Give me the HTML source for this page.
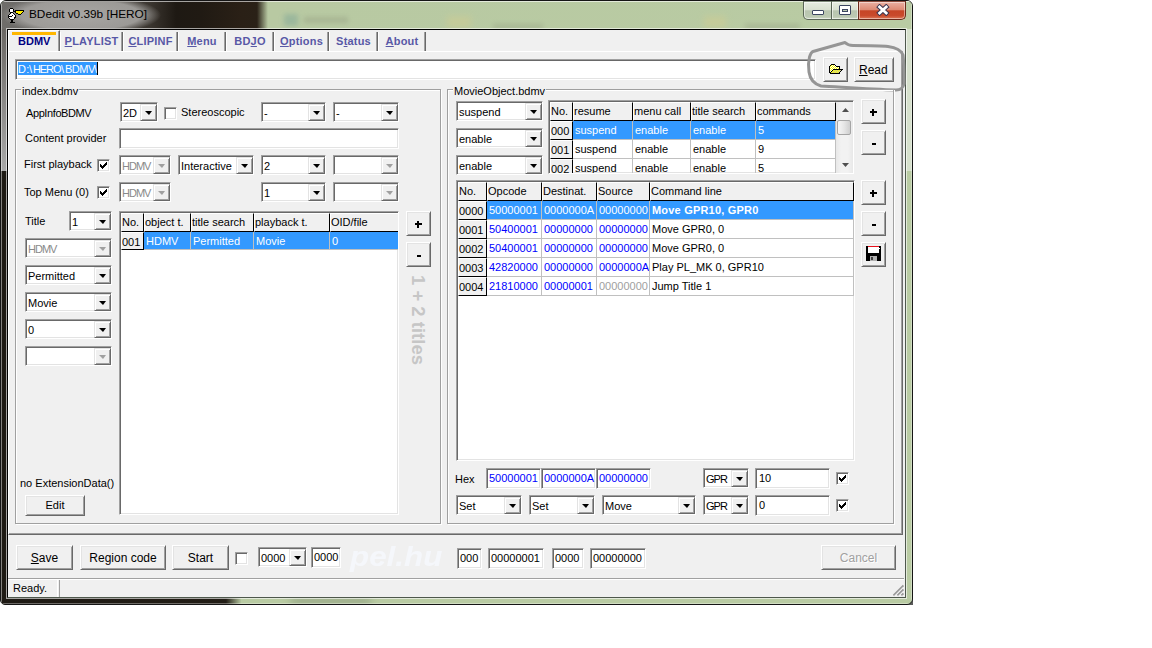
<!DOCTYPE html><html><head><meta charset="utf-8"><title>BDedit</title><style>
*{margin:0;padding:0;box-sizing:border-box}
html,body{width:1152px;height:648px;background:#fff;overflow:hidden}
body{position:relative;font:11px "Liberation Sans",sans-serif;color:#000}
.a{position:absolute}
.t{position:absolute;white-space:nowrap;line-height:13px}
.sunk{position:absolute;background:#fff;border:1px solid;border-color:#a0a0a0 #fff #fff #a0a0a0;box-shadow:inset 1px 1px #696969,inset -1px -1px #e3e3e3;overflow:hidden}
.btn{position:absolute;background:#f0f0f0;border:1px solid;border-color:#fff #696969 #696969 #fff;box-shadow:inset 1px 1px #e3e3e3,inset -1px -1px #a0a0a0;text-align:center;line-height:13px}
.ct{position:absolute;left:2px;top:4px;line-height:13px;white-space:nowrap}
.ddb{position:absolute;right:0;top:1px;bottom:0;width:17px;background:#f0f0f0;border:1px solid;border-color:#e3e3e3 #696969 #696969 #e3e3e3;box-shadow:inset 1px 1px #fff,inset -1px -1px #a0a0a0}
.arr{position:absolute;left:4px;top:6px;width:0;height:0;border-left:4px solid transparent;border-right:3px solid transparent;border-top:4px solid #000}
.arr.dis{border-top-color:#a0a0a0}
.chk{position:absolute;width:13px;height:13px;background:#fff;border:1px solid;border-color:#a0a0a0 #fff #fff #a0a0a0;box-shadow:inset 1px 1px #696969,inset -1px -1px #e3e3e3}
.grp{position:absolute;border:1px solid #a0a0a0;box-shadow:1px 1px #fff,inset 1px 1px #fff}
.glab{background:#f0f0f0;padding:0 1px}
.tab{position:absolute;top:32px;height:19px;border-left:1px solid #fff;border-right:1px solid #696969;box-shadow:inset -1px 0 #a0a0a0;font-weight:bold;color:#5858a6;text-align:center;line-height:13px;padding-top:3px;letter-spacing:0.2px}
.tab u{text-decoration:underline;text-underline-offset:1px;text-decoration-thickness:1px}
.grid{position:absolute;background:#fff;border:1px solid;border-color:#a0a0a0 #fff #fff #a0a0a0;box-shadow:inset 1px 1px #696969,inset -1px -1px #e3e3e3;overflow:hidden}
.fc{position:absolute;background:#f0f0f0;border-top:1px solid #fff;border-left:1px solid #fff;border-right:1px solid #000;border-bottom:1px solid #000;line-height:13px;padding:2px 0 0 0;white-space:nowrap;overflow:hidden}
.dc{position:absolute;border-right:1px solid #c0c0c0;border-bottom:1px solid #c0c0c0;line-height:13px;padding:3px 0 0 2px;white-space:nowrap;overflow:hidden}
.sel{background:#3399ff;color:#fff}
.blue{color:#0000ff}
</style></head><body>
<div class="a" style="left:905px;top:597px;width:8px;height:8px;background:linear-gradient(135deg,#777 0,#555 100%)"></div>
<div class="a" style="left:0;top:0;width:913px;height:605px;border-radius:6px 6px 6px 5px;overflow:hidden;border:1px solid #151515;background:#b9cba3"><div class="a" style="left:0;top:0;width:911px;height:29px;background:linear-gradient(90deg,#6f6d6a 0,#6a6865 60px,#3a352f 150px,#1e1913 175px,#201a13 200px,#2a2016 240px,#2a2117 256px,#b8c9a2 267px,#b9cba3 100%)"></div><div class="a" style="left:0;top:28px;width:7px;height:142px;background:linear-gradient(#6a6763,#a9a9a9)"></div><div class="a" style="left:0;top:170px;width:7px;height:440px;background:#1e1a14"></div><div class="a" style="left:905px;top:28px;width:6px;height:142px;background:#d6e0cc"></div><div class="a" style="left:0;top:596px;width:240px;height:10px;background:linear-gradient(90deg,#1e1a14 0,#221d15 225px,#b4c59e 240px)"></div><div class="a" style="left:290px;top:597px;width:80px;height:6px;background:#8e9e7e;filter:blur(4px)"></div><div class="a" style="left:0;top:0;width:1px;height:605px;background:rgba(255,255,255,.45)"></div><div class="a" style="left:0;top:0;width:911px;height:1px;background:rgba(255,255,255,.6)"></div><div class="a" style="left:0;top:602px;width:911px;height:1px;background:rgba(255,255,255,.35)"></div><div class="a" style="left:910px;top:0;width:1px;height:605px;background:rgba(255,255,255,.35)"></div><div class="a" style="left:283px;top:13px;width:14px;height:12px;background:#8fb09a;filter:blur(2.5px);opacity:.7"></div><div class="a" style="left:303px;top:16px;width:44px;height:6px;background:#a3b08f;filter:blur(2.5px);opacity:.8"></div><div class="a" style="left:446px;top:15px;width:24px;height:12px;background:#cdcc94;filter:blur(3px);opacity:.6"></div><div class="a" style="left:492px;top:23px;width:50px;height:5px;background:#a3b08f;filter:blur(2.5px);opacity:.8"></div><div class="a" style="left:703px;top:15px;width:22px;height:12px;background:#cdcc94;filter:blur(3px);opacity:.6"></div><div class="a" style="left:744px;top:23px;width:55px;height:5px;background:#a3b08f;filter:blur(2.5px);opacity:.8"></div></div>
<div class="a" style="left:1px;top:1px;width:175px;height:27px;background:radial-gradient(ellipse 80px 20px at 80px 14px,rgba(168,166,163,1) 0,rgba(160,158,155,.95) 75%,rgba(120,118,115,0) 100%)"></div>
<svg class="a" style="left:7px;top:8px" width="20" height="15" shape-rendering="crispEdges"><rect x="3" y="0" width="1" height="1" fill="#000"/><rect x="4" y="0" width="1" height="1" fill="#000"/><rect x="5" y="0" width="1" height="1" fill="#000"/><rect x="2" y="1" width="1" height="1" fill="#000"/><rect x="3" y="1" width="1" height="1" fill="#fff"/><rect x="4" y="1" width="1" height="1" fill="#fff"/><rect x="5" y="1" width="1" height="1" fill="#fff"/><rect x="6" y="1" width="1" height="1" fill="#000"/><rect x="2" y="2" width="1" height="1" fill="#000"/><rect x="3" y="2" width="1" height="1" fill="#fff"/><rect x="4" y="2" width="1" height="1" fill="#fff"/><rect x="5" y="2" width="1" height="1" fill="#fff"/><rect x="6" y="2" width="1" height="1" fill="#000"/><rect x="8" y="2" width="1" height="1" fill="#000"/><rect x="9" y="2" width="1" height="1" fill="#000"/><rect x="10" y="2" width="1" height="1" fill="#000"/><rect x="11" y="2" width="1" height="1" fill="#000"/><rect x="12" y="2" width="1" height="1" fill="#000"/><rect x="13" y="2" width="1" height="1" fill="#000"/><rect x="14" y="2" width="1" height="1" fill="#000"/><rect x="15" y="2" width="1" height="1" fill="#000"/><rect x="16" y="2" width="1" height="1" fill="#000"/><rect x="2" y="3" width="1" height="1" fill="#000"/><rect x="3" y="3" width="1" height="1" fill="#fff"/><rect x="4" y="3" width="1" height="1" fill="#fff"/><rect x="5" y="3" width="1" height="1" fill="#fff"/><rect x="6" y="3" width="1" height="1" fill="#000"/><rect x="7" y="3" width="1" height="1" fill="#000"/><rect x="8" y="3" width="1" height="1" fill="#000"/><rect x="9" y="3" width="1" height="1" fill="#ffee00"/><rect x="10" y="3" width="1" height="1" fill="#ffee00"/><rect x="11" y="3" width="1" height="1" fill="#ffee00"/><rect x="12" y="3" width="1" height="1" fill="#ffee00"/><rect x="13" y="3" width="1" height="1" fill="#ffee00"/><rect x="14" y="3" width="1" height="1" fill="#ffee00"/><rect x="15" y="3" width="1" height="1" fill="#ffee00"/><rect x="16" y="3" width="1" height="1" fill="#000"/><rect x="3" y="4" width="1" height="1" fill="#000"/><rect x="4" y="4" width="1" height="1" fill="#000"/><rect x="5" y="4" width="1" height="1" fill="#000"/><rect x="8" y="4" width="1" height="1" fill="#000"/><rect x="9" y="4" width="1" height="1" fill="#ffee00"/><rect x="10" y="4" width="1" height="1" fill="#ffee00"/><rect x="11" y="4" width="1" height="1" fill="#ffee00"/><rect x="12" y="4" width="1" height="1" fill="#ffee00"/><rect x="13" y="4" width="1" height="1" fill="#ffee00"/><rect x="14" y="4" width="1" height="1" fill="#ffee00"/><rect x="15" y="4" width="1" height="1" fill="#000"/><rect x="3" y="5" width="1" height="1" fill="#000"/><rect x="4" y="5" width="1" height="1" fill="#fff"/><rect x="5" y="5" width="1" height="1" fill="#fff"/><rect x="6" y="5" width="1" height="1" fill="#000"/><rect x="9" y="5" width="1" height="1" fill="#000"/><rect x="10" y="5" width="1" height="1" fill="#000"/><rect x="11" y="5" width="1" height="1" fill="#ffee00"/><rect x="12" y="5" width="1" height="1" fill="#ffee00"/><rect x="13" y="5" width="1" height="1" fill="#ffee00"/><rect x="14" y="5" width="1" height="1" fill="#000"/><rect x="2" y="6" width="1" height="1" fill="#000"/><rect x="3" y="6" width="1" height="1" fill="#fff"/><rect x="4" y="6" width="1" height="1" fill="#fff"/><rect x="5" y="6" width="1" height="1" fill="#fff"/><rect x="6" y="6" width="1" height="1" fill="#fff"/><rect x="7" y="6" width="1" height="1" fill="#000"/><rect x="11" y="6" width="1" height="1" fill="#000"/><rect x="12" y="6" width="1" height="1" fill="#000"/><rect x="13" y="6" width="1" height="1" fill="#000"/><rect x="1" y="7" width="1" height="1" fill="#000"/><rect x="2" y="7" width="1" height="1" fill="#fff"/><rect x="3" y="7" width="1" height="1" fill="#fff"/><rect x="4" y="7" width="1" height="1" fill="#fff"/><rect x="5" y="7" width="1" height="1" fill="#000"/><rect x="6" y="7" width="1" height="1" fill="#fff"/><rect x="7" y="7" width="1" height="1" fill="#fff"/><rect x="8" y="7" width="1" height="1" fill="#000"/><rect x="1" y="8" width="1" height="1" fill="#000"/><rect x="2" y="8" width="1" height="1" fill="#000"/><rect x="3" y="8" width="1" height="1" fill="#000"/><rect x="4" y="8" width="1" height="1" fill="#000"/><rect x="5" y="8" width="1" height="1" fill="#fff"/><rect x="6" y="8" width="1" height="1" fill="#fff"/><rect x="7" y="8" width="1" height="1" fill="#fff"/><rect x="8" y="8" width="1" height="1" fill="#000"/><rect x="1" y="9" width="1" height="1" fill="#000"/><rect x="2" y="9" width="1" height="1" fill="#fff"/><rect x="3" y="9" width="1" height="1" fill="#fff"/><rect x="4" y="9" width="1" height="1" fill="#fff"/><rect x="5" y="9" width="1" height="1" fill="#fff"/><rect x="6" y="9" width="1" height="1" fill="#fff"/><rect x="7" y="9" width="1" height="1" fill="#000"/><rect x="8" y="9" width="1" height="1" fill="#000"/><rect x="2" y="10" width="1" height="1" fill="#000"/><rect x="3" y="10" width="1" height="1" fill="#fff"/><rect x="4" y="10" width="1" height="1" fill="#fff"/><rect x="5" y="10" width="1" height="1" fill="#fff"/><rect x="6" y="10" width="1" height="1" fill="#fff"/><rect x="7" y="10" width="1" height="1" fill="#000"/><rect x="3" y="11" width="1" height="1" fill="#000"/><rect x="4" y="11" width="1" height="1" fill="#000"/><rect x="5" y="11" width="1" height="1" fill="#000"/><rect x="6" y="11" width="1" height="1" fill="#000"/><rect x="4" y="12" width="1" height="1" fill="#000"/><rect x="5" y="12" width="1" height="1" fill="#000"/><rect x="4" y="13" width="1" height="1" fill="#000"/><rect x="5" y="13" width="1" height="1" fill="#000"/><rect x="3" y="14" width="1" height="1" fill="#000"/><rect x="4" y="14" width="1" height="1" fill="#000"/><rect x="5" y="14" width="1" height="1" fill="#000"/><rect x="6" y="14" width="1" height="1" fill="#000"/><rect x="7" y="14" width="1" height="1" fill="#000"/></svg>
<div class="t " style="left:29px;top:7px;font-size:11.8px;color:#000;line-height:15px">BDedit v0.39b [HERO]</div>
<div class="a" style="left:803px;top:1px;width:56px;height:19px;border:1px solid #5a6656;border-top-color:#7d8a78;border-radius:0 0 0 5px;background:linear-gradient(#e6ece0 0,#d9e1d1 45%,#b9c5b0 52%,#bcc9b2 85%,#cdd8c4 100%);box-shadow:inset 0 0 0 1px rgba(255,255,255,.55)"></div>
<div class="a" style="left:831px;top:1px;width:1px;height:19px;background:#5a6656"></div>
<div class="a" style="left:832px;top:2px;width:1px;height:17px;background:rgba(255,255,255,.6)"></div>
<div class="a" style="left:858px;top:1px;width:48px;height:19px;border:1px solid #6b2a1a;border-top-color:#8a4a3a;border-radius:0 0 5px 0;background:linear-gradient(#eab0a2 0,#dd8a74 45%,#c64526 52%,#c94a2c 80%,#dc7a5a 100%);box-shadow:inset 0 0 0 1px rgba(255,255,255,.45)"></div>
<div class="a" style="left:812px;top:10px;width:12px;height:5px;background:#fff;border:1px solid #3b4560;border-radius:1px"></div>
<div class="a" style="left:839px;top:5px;width:12px;height:10px;background:#fff;border:1px solid #3b4560;border-radius:1px"><div class="a" style="left:2px;top:3px;width:6px;height:3px;background:#b9c7ae;border:1px solid #3b4560"></div></div>
<svg class="a" style="left:876px;top:4px" width="14" height="12" viewBox="0 0 14 12"><path d="M3.6 3L10.2 9M10.2 3L3.6 9" stroke="#3b3550" stroke-width="4.8" stroke-linecap="square"/><path d="M3.6 3L10.2 9M10.2 3L3.6 9" stroke="#fff" stroke-width="2.8" stroke-linecap="square"/></svg>
<div class="a" style="left:7px;top:29px;width:899px;height:569px;border:1px solid #000;border-right-color:#4e584c;border-bottom-color:#4e584c;background:#f0f0f0;box-shadow:0 0 0 1px rgba(255,255,255,.6)"></div>
<div class="a" style="left:8px;top:51px;width:895px;height:484px;border-top:1px solid #fff;border-left:1px solid #fff;border-right:1px solid #696969;border-bottom:1px solid #696969;box-shadow:inset -1px -1px #a0a0a0"></div>
<div class="tab" style="left:60px;width:63px"><u>P</u>LAYLIST</div>
<div class="tab" style="left:123px;width:55px"><u>C</u>LIPINF</div>
<div class="tab" style="left:178px;width:48px"><u>M</u>enu</div>
<div class="tab" style="left:226px;width:48px">BD<u>J</u>O</div>
<div class="tab" style="left:274px;width:55px"><u>O</u>ptions</div>
<div class="tab" style="left:329px;width:49px">S<u>t</u>atus</div>
<div class="tab" style="left:378px;width:48px"><u>A</u>bout</div>
<div class="a" style="left:8px;top:30px;width:52px;height:21px;background:#f0f0f0;border-top:1px solid #fff;border-left:1px solid #fff;border-right:1px solid #696969;box-shadow:inset -1px 0 #a0a0a0"></div>
<div class="a" style="left:12px;top:32px;width:44px;height:3px;background:#ffb700"></div>
<div class="t " style="left:18px;top:35px;font-weight:bold;color:#000080">BDMV</div>
<div class="sunk" style="left:15px;top:59px;width:801px;height:21px"><div class="a" style="left:2px;top:2px;height:13px;width:79px;background:#3399ff;color:#fff;line-height:13px"><span class="a" style="left:0px;top:0.5px;letter-spacing:0.3px">D:</span><span class="a" style="left:11px;top:0.5px;letter-spacing:0px">\</span><span class="a" style="left:15px;top:0.5px;letter-spacing:-1.1px">HERO</span><span class="a" style="left:43px;top:0.5px;letter-spacing:0px">\</span><span class="a" style="left:47px;top:0.5px;letter-spacing:-0.5px">BDMV</span><span class="a" style="left:76px;top:0.5px;letter-spacing:0px">\</span></div><div class="a" style="left:81px;top:2px;width:1px;height:13px;background:#000"></div></div>
<div class="btn" style="left:823px;top:57px;width:25px;height:25px;"><svg class="a" style="left:5px;top:6px" width="14" height="10" shape-rendering="crispEdges"><rect x="2" y="0" width="1" height="1" fill="#000"/><rect x="3" y="0" width="1" height="1" fill="#000"/><rect x="4" y="0" width="1" height="1" fill="#000"/><rect x="5" y="0" width="1" height="1" fill="#000"/><rect x="1" y="1" width="1" height="1" fill="#000"/><rect x="2" y="1" width="1" height="1" fill="#ffff00"/><rect x="3" y="1" width="1" height="1" fill="#fff"/><rect x="4" y="1" width="1" height="1" fill="#ffff00"/><rect x="5" y="1" width="1" height="1" fill="#fff"/><rect x="6" y="1" width="1" height="1" fill="#000"/><rect x="0" y="2" width="1" height="1" fill="#000"/><rect x="1" y="2" width="1" height="1" fill="#ffff00"/><rect x="2" y="2" width="1" height="1" fill="#fff"/><rect x="3" y="2" width="1" height="1" fill="#ffff00"/><rect x="4" y="2" width="1" height="1" fill="#fff"/><rect x="5" y="2" width="1" height="1" fill="#ffff00"/><rect x="6" y="2" width="1" height="1" fill="#fff"/><rect x="7" y="2" width="1" height="1" fill="#000"/><rect x="8" y="2" width="1" height="1" fill="#000"/><rect x="9" y="2" width="1" height="1" fill="#000"/><rect x="10" y="2" width="1" height="1" fill="#000"/><rect x="0" y="3" width="1" height="1" fill="#000"/><rect x="1" y="3" width="1" height="1" fill="#fff"/><rect x="2" y="3" width="1" height="1" fill="#ffff00"/><rect x="3" y="3" width="1" height="1" fill="#fff"/><rect x="4" y="3" width="1" height="1" fill="#ffff00"/><rect x="5" y="3" width="1" height="1" fill="#fff"/><rect x="6" y="3" width="1" height="1" fill="#ffff00"/><rect x="7" y="3" width="1" height="1" fill="#fff"/><rect x="8" y="3" width="1" height="1" fill="#ffff00"/><rect x="9" y="3" width="1" height="1" fill="#fff"/><rect x="10" y="3" width="1" height="1" fill="#000"/><rect x="0" y="4" width="1" height="1" fill="#000"/><rect x="1" y="4" width="1" height="1" fill="#ffff00"/><rect x="2" y="4" width="1" height="1" fill="#fff"/><rect x="3" y="4" width="1" height="1" fill="#ffff00"/><rect x="4" y="4" width="1" height="1" fill="#fff"/><rect x="5" y="4" width="1" height="1" fill="#ffff00"/><rect x="6" y="4" width="1" height="1" fill="#fff"/><rect x="7" y="4" width="1" height="1" fill="#ffff00"/><rect x="8" y="4" width="1" height="1" fill="#fff"/><rect x="9" y="4" width="1" height="1" fill="#ffff00"/><rect x="10" y="4" width="1" height="1" fill="#000"/><rect x="0" y="5" width="1" height="1" fill="#000"/><rect x="1" y="5" width="1" height="1" fill="#fff"/><rect x="2" y="5" width="1" height="1" fill="#ffff00"/><rect x="3" y="5" width="1" height="1" fill="#fff"/><rect x="4" y="5" width="1" height="1" fill="#000"/><rect x="5" y="5" width="1" height="1" fill="#000"/><rect x="6" y="5" width="1" height="1" fill="#000"/><rect x="7" y="5" width="1" height="1" fill="#000"/><rect x="8" y="5" width="1" height="1" fill="#000"/><rect x="9" y="5" width="1" height="1" fill="#000"/><rect x="10" y="5" width="1" height="1" fill="#000"/><rect x="11" y="5" width="1" height="1" fill="#000"/><rect x="12" y="5" width="1" height="1" fill="#000"/><rect x="13" y="5" width="1" height="1" fill="#000"/><rect x="0" y="6" width="1" height="1" fill="#000"/><rect x="1" y="6" width="1" height="1" fill="#ffff00"/><rect x="2" y="6" width="1" height="1" fill="#fff"/><rect x="3" y="6" width="1" height="1" fill="#000"/><rect x="4" y="6" width="1" height="1" fill="#ffff00"/><rect x="5" y="6" width="1" height="1" fill="#c8c8a0"/><rect x="6" y="6" width="1" height="1" fill="#ffff00"/><rect x="7" y="6" width="1" height="1" fill="#c8c8a0"/><rect x="8" y="6" width="1" height="1" fill="#ffff00"/><rect x="9" y="6" width="1" height="1" fill="#c8c8a0"/><rect x="10" y="6" width="1" height="1" fill="#ffff00"/><rect x="11" y="6" width="1" height="1" fill="#c8c8a0"/><rect x="12" y="6" width="1" height="1" fill="#000"/><rect x="0" y="7" width="1" height="1" fill="#000"/><rect x="1" y="7" width="1" height="1" fill="#fff"/><rect x="2" y="7" width="1" height="1" fill="#000"/><rect x="3" y="7" width="1" height="1" fill="#ffff00"/><rect x="4" y="7" width="1" height="1" fill="#c8c8a0"/><rect x="5" y="7" width="1" height="1" fill="#ffff00"/><rect x="6" y="7" width="1" height="1" fill="#c8c8a0"/><rect x="7" y="7" width="1" height="1" fill="#ffff00"/><rect x="8" y="7" width="1" height="1" fill="#c8c8a0"/><rect x="9" y="7" width="1" height="1" fill="#ffff00"/><rect x="10" y="7" width="1" height="1" fill="#c8c8a0"/><rect x="11" y="7" width="1" height="1" fill="#000"/><rect x="0" y="8" width="1" height="1" fill="#000"/><rect x="1" y="8" width="1" height="1" fill="#000"/><rect x="2" y="8" width="1" height="1" fill="#ffff00"/><rect x="3" y="8" width="1" height="1" fill="#c8c8a0"/><rect x="4" y="8" width="1" height="1" fill="#ffff00"/><rect x="5" y="8" width="1" height="1" fill="#c8c8a0"/><rect x="6" y="8" width="1" height="1" fill="#ffff00"/><rect x="7" y="8" width="1" height="1" fill="#c8c8a0"/><rect x="8" y="8" width="1" height="1" fill="#ffff00"/><rect x="9" y="8" width="1" height="1" fill="#c8c8a0"/><rect x="10" y="8" width="1" height="1" fill="#000"/><rect x="1" y="9" width="1" height="1" fill="#000"/><rect x="2" y="9" width="1" height="1" fill="#000"/><rect x="3" y="9" width="1" height="1" fill="#000"/><rect x="4" y="9" width="1" height="1" fill="#000"/><rect x="5" y="9" width="1" height="1" fill="#000"/><rect x="6" y="9" width="1" height="1" fill="#000"/><rect x="7" y="9" width="1" height="1" fill="#000"/><rect x="8" y="9" width="1" height="1" fill="#000"/><rect x="9" y="9" width="1" height="1" fill="#000"/><rect x="10" y="9" width="1" height="1" fill="#000"/></svg></div>
<div class="btn" style="left:854px;top:57px;width:40px;height:25px;"><span class="a" style="left:4px;top:6px;font-size:12px"><u>R</u>ead</span></div>
<svg class="a" style="left:800px;top:38px" width="112" height="58" viewBox="0 0 112 58"><path d="M13 13.5 L45 4.5 C47 6.5 49 7.5 53 7.5 C66 7.5 80 7.5 88 8.5 C96 9.5 101 12 103 17 C104 25 104 40 104 46 C103 50 100 52 96 52 C70 51 40 49 21 48 C14 46 10 41 9 34 C8 28 8.5 23 9.5 19 C10.5 16 11.5 14 13 13.5" fill="none" stroke="#959595" stroke-width="3" stroke-linejoin="round" stroke-linecap="round"/></svg>
<div class="grp" style="left:15px;top:89px;width:426px;height:435px"></div>
<div class="t glab" style="left:21px;top:85px;">index.bdmv</div>
<div class="t " style="left:26px;top:107px;letter-spacing:-0.4px">AppInfoBDMV</div>
<div class="sunk" style="left:120px;top:102px;width:38px;height:20px;"><span class="ct " style="">2D</span><div class="ddb"><i class="arr"></i></div></div>
<div class="chk" style="left:164px;top:107px"></div>
<div class="t " style="left:181px;top:106px;">Stereoscopic</div>
<div class="sunk" style="left:261px;top:102px;width:65px;height:20px;"><span class="ct " style="">-</span><div class="ddb"><i class="arr"></i></div></div>
<div class="sunk" style="left:333px;top:102px;width:66px;height:20px;"><span class="ct " style="">-</span><div class="ddb"><i class="arr"></i></div></div>
<div class="t " style="left:25px;top:132px;">Content provider</div>
<div class="sunk" style="left:119px;top:128px;width:280px;height:21px;"></div>
<div class="t " style="left:24px;top:158px;">First playback</div>
<div class="chk" style="left:97px;top:159px"><svg width="7" height="7" style="position:absolute;left:2px;top:2px" shape-rendering="crispEdges" fill="#000"><rect x="6" y="0" width="1" height="1"/><rect x="5" y="1" width="1" height="1"/><rect x="6" y="1" width="1" height="1"/><rect x="0" y="2" width="1" height="1"/><rect x="4" y="2" width="1" height="1"/><rect x="5" y="2" width="1" height="1"/><rect x="6" y="2" width="1" height="1"/><rect x="0" y="3" width="1" height="1"/><rect x="1" y="3" width="1" height="1"/><rect x="3" y="3" width="1" height="1"/><rect x="4" y="3" width="1" height="1"/><rect x="5" y="3" width="1" height="1"/><rect x="0" y="4" width="1" height="1"/><rect x="1" y="4" width="1" height="1"/><rect x="2" y="4" width="1" height="1"/><rect x="3" y="4" width="1" height="1"/><rect x="4" y="4" width="1" height="1"/><rect x="1" y="5" width="1" height="1"/><rect x="2" y="5" width="1" height="1"/><rect x="3" y="5" width="1" height="1"/><rect x="2" y="6" width="1" height="1"/></svg></div>
<div class="sunk" style="left:119px;top:155px;width:52px;height:20px;color:#8a8a8a;"><span class="ct " style="letter-spacing:-1px">HDMV</span><div class="ddb"><i class="arr dis"></i></div></div>
<div class="sunk" style="left:178px;top:155px;width:76px;height:20px;"><span class="ct " style="">Interactive</span><div class="ddb"><i class="arr"></i></div></div>
<div class="sunk" style="left:261px;top:155px;width:65px;height:20px;"><span class="ct " style="">2</span><div class="ddb"><i class="arr"></i></div></div>
<div class="sunk" style="left:333px;top:155px;width:66px;height:20px;color:#8a8a8a;"><span class="ct " style=""></span><div class="ddb"><i class="arr dis"></i></div></div>
<div class="t " style="left:24px;top:186px;">Top Menu (0)</div>
<div class="chk" style="left:97px;top:186px"><svg width="7" height="7" style="position:absolute;left:2px;top:2px" shape-rendering="crispEdges" fill="#000"><rect x="6" y="0" width="1" height="1"/><rect x="5" y="1" width="1" height="1"/><rect x="6" y="1" width="1" height="1"/><rect x="0" y="2" width="1" height="1"/><rect x="4" y="2" width="1" height="1"/><rect x="5" y="2" width="1" height="1"/><rect x="6" y="2" width="1" height="1"/><rect x="0" y="3" width="1" height="1"/><rect x="1" y="3" width="1" height="1"/><rect x="3" y="3" width="1" height="1"/><rect x="4" y="3" width="1" height="1"/><rect x="5" y="3" width="1" height="1"/><rect x="0" y="4" width="1" height="1"/><rect x="1" y="4" width="1" height="1"/><rect x="2" y="4" width="1" height="1"/><rect x="3" y="4" width="1" height="1"/><rect x="4" y="4" width="1" height="1"/><rect x="1" y="5" width="1" height="1"/><rect x="2" y="5" width="1" height="1"/><rect x="3" y="5" width="1" height="1"/><rect x="2" y="6" width="1" height="1"/></svg></div>
<div class="sunk" style="left:119px;top:182px;width:52px;height:20px;color:#8a8a8a;"><span class="ct " style="letter-spacing:-1px">HDMV</span><div class="ddb"><i class="arr dis"></i></div></div>
<div class="sunk" style="left:261px;top:182px;width:65px;height:20px;"><span class="ct " style="">1</span><div class="ddb"><i class="arr"></i></div></div>
<div class="sunk" style="left:333px;top:182px;width:66px;height:20px;color:#8a8a8a;"><span class="ct " style=""></span><div class="ddb"><i class="arr dis"></i></div></div>
<div class="t " style="left:25px;top:215px;">Title</div>
<div class="sunk" style="left:69px;top:211px;width:43px;height:20px;"><span class="ct " style="">1</span><div class="ddb"><i class="arr"></i></div></div>
<div class="sunk" style="left:25px;top:238px;width:87px;height:20px;color:#8a8a8a;"><span class="ct " style="letter-spacing:-1px">HDMV</span><div class="ddb"><i class="arr dis"></i></div></div>
<div class="sunk" style="left:25px;top:265px;width:87px;height:20px;"><span class="ct " style="">Permitted</span><div class="ddb"><i class="arr"></i></div></div>
<div class="sunk" style="left:25px;top:292px;width:87px;height:20px;"><span class="ct " style="">Movie</span><div class="ddb"><i class="arr"></i></div></div>
<div class="sunk" style="left:25px;top:319px;width:87px;height:20px;"><span class="ct " style="">0</span><div class="ddb"><i class="arr"></i></div></div>
<div class="sunk" style="left:25px;top:346px;width:87px;height:20px;color:#8a8a8a;"><span class="ct " style=""></span><div class="ddb"><i class="arr dis"></i></div></div>
<div class="t " style="left:20px;top:477px;">no ExtensionData()</div>
<div class="btn" style="left:25px;top:495px;width:60px;height:21px;"><span class="a" style="left:0;right:0;top:3px">Edit</span></div>
<div class="grid" style="left:119px;top:211px;width:280px;height:304px">
<div class="fc" style="left:1px;top:1px;width:23px;height:19px">No.</div>
<div class="fc" style="left:24px;top:1px;width:47px;height:19px">object t.</div>
<div class="fc" style="left:71px;top:1px;width:63px;height:19px">title search</div>
<div class="fc" style="left:134px;top:1px;width:76px;height:19px">playback t.</div>
<div class="fc" style="left:210px;top:1px;width:69px;height:19px">OID/file</div>
<div class="fc" style="left:1px;top:20px;width:23px;height:18px;padding-top:3px">001</div>
<div class="dc sel" style="left:24px;top:20px;width:47px;height:18px">HDMV</div>
<div class="dc sel" style="left:71px;top:20px;width:63px;height:18px">Permitted</div>
<div class="dc sel" style="left:134px;top:20px;width:76px;height:18px">Movie</div>
<div class="dc sel" style="left:210px;top:20px;width:69px;height:18px">0</div>
</div>
<div class="btn" style="left:406px;top:211px;width:25px;height:25px;"><i class="a" style="left:8px;top:11px;width:7px;height:2px;background:#000"></i><i class="a" style="left:10px;top:9px;width:2px;height:7px;background:#000"></i></div>
<div class="btn" style="left:406px;top:242px;width:25px;height:25px;"><i class="a" style="left:10px;top:12px;width:4px;height:2px;background:#000"></i></div>
<div class="t" style="left:427px;top:275px;transform-origin:0 0;transform:rotate(90deg);font:bold 18.5px/18px 'Liberation Sans',sans-serif;color:#c6c6c6">1 + 2 titles</div>
<div class="grp" style="left:447px;top:89px;width:447px;height:435px"></div>
<div class="t glab" style="left:453px;top:85px;">MovieObject.bdmv</div>
<div class="sunk" style="left:456px;top:101px;width:87px;height:20px;"><span class="ct " style="">suspend</span><div class="ddb"><i class="arr"></i></div></div>
<div class="sunk" style="left:456px;top:128px;width:87px;height:20px;"><span class="ct " style="">enable</span><div class="ddb"><i class="arr"></i></div></div>
<div class="sunk" style="left:456px;top:155px;width:87px;height:20px;"><span class="ct " style="">enable</span><div class="ddb"><i class="arr"></i></div></div>
<div class="grid" style="left:548px;top:100px;width:306px;height:74px">
<div class="fc" style="left:1px;top:1px;width:23px;height:19px">No.</div>
<div class="fc" style="left:24px;top:1px;width:60px;height:19px">resume</div>
<div class="fc" style="left:84px;top:1px;width:58px;height:19px">menu call</div>
<div class="fc" style="left:142px;top:1px;width:65px;height:19px">title search</div>
<div class="fc" style="left:207px;top:1px;width:80px;height:19px">commands</div>
<div class="fc" style="left:1px;top:20px;width:23px;height:19px;padding-top:3px">000</div>
<div class="dc sel" style="left:24px;top:20px;width:60px;height:19px">suspend</div>
<div class="dc sel" style="left:84px;top:20px;width:58px;height:19px">enable</div>
<div class="dc sel" style="left:142px;top:20px;width:65px;height:19px">enable</div>
<div class="dc sel" style="left:207px;top:20px;width:80px;height:19px">5</div>
<div class="fc" style="left:1px;top:39px;width:23px;height:19px;padding-top:3px">001</div>
<div class="dc" style="left:24px;top:39px;width:60px;height:19px">suspend</div>
<div class="dc" style="left:84px;top:39px;width:58px;height:19px">enable</div>
<div class="dc" style="left:142px;top:39px;width:65px;height:19px">enable</div>
<div class="dc" style="left:207px;top:39px;width:80px;height:19px">9</div>
<div class="fc" style="left:1px;top:58px;width:23px;height:19px;padding-top:3px">002</div>
<div class="dc" style="left:24px;top:58px;width:60px;height:19px">suspend</div>
<div class="dc" style="left:84px;top:58px;width:58px;height:19px">enable</div>
<div class="dc" style="left:142px;top:58px;width:65px;height:19px">enable</div>
<div class="dc" style="left:207px;top:58px;width:80px;height:19px">5</div>
<div class="a" style="left:287px;top:1px;width:17px;height:71px;background:linear-gradient(90deg,#e8e8e8,#f2f2f2 30%,#f2f2f2 70%,#e8e8e8)"></div>
<svg class="a" style="left:293px;top:7px" width="7" height="4"><path d="M0 4L3.5 0L7 4z" fill="#505050"/></svg>
<div class="a" style="left:288px;top:19px;width:14px;height:15px;border:1px solid #a5a5a5;border-radius:2px;background:linear-gradient(90deg,#f6f6f6,#e6e6e6 50%,#cfcfcf)"></div>
<svg class="a" style="left:293px;top:62px" width="7" height="4"><path d="M0 0L3.5 4L7 0z" fill="#505050"/></svg>
</div>
<div class="btn" style="left:861px;top:99px;width:25px;height:25px;"><i class="a" style="left:8px;top:11px;width:7px;height:2px;background:#000"></i><i class="a" style="left:10px;top:9px;width:2px;height:7px;background:#000"></i></div>
<div class="btn" style="left:861px;top:130px;width:25px;height:25px;"><i class="a" style="left:10px;top:12px;width:4px;height:2px;background:#000"></i></div>
<div class="grid" style="left:456px;top:180px;width:399px;height:281px">
<div class="fc" style="left:1px;top:1px;width:29px;height:19px">No.</div>
<div class="fc" style="left:30px;top:1px;width:55px;height:19px">Opcode</div>
<div class="fc" style="left:85px;top:1px;width:55px;height:19px">Destinat.</div>
<div class="fc" style="left:140px;top:1px;width:53px;height:19px">Source</div>
<div class="fc" style="left:193px;top:1px;width:204px;height:19px">Command line</div>
<div class="fc" style="left:1px;top:20px;width:29px;height:19px;padding-top:3px">0000</div>
<div class="dc sel" style="left:30px;top:20px;width:55px;height:19px;">50000001</div>
<div class="dc sel" style="left:85px;top:20px;width:55px;height:19px;">0000000A</div>
<div class="dc sel" style="left:140px;top:20px;width:53px;height:19px;">00000000</div>
<div class="dc sel" style="left:193px;top:20px;width:204px;height:19px;"><b style="letter-spacing:0.2px">Move GPR10, GPR0</b></div>
<div class="fc" style="left:1px;top:39px;width:29px;height:19px;padding-top:3px">0001</div>
<div class="dc blue" style="left:30px;top:39px;width:55px;height:19px;">50400001</div>
<div class="dc blue" style="left:85px;top:39px;width:55px;height:19px;">00000000</div>
<div class="dc blue" style="left:140px;top:39px;width:53px;height:19px;">00000000</div>
<div class="dc" style="left:193px;top:39px;width:204px;height:19px;">Move GPR0, 0</div>
<div class="fc" style="left:1px;top:58px;width:29px;height:19px;padding-top:3px">0002</div>
<div class="dc blue" style="left:30px;top:58px;width:55px;height:19px;">50400001</div>
<div class="dc blue" style="left:85px;top:58px;width:55px;height:19px;">00000000</div>
<div class="dc blue" style="left:140px;top:58px;width:53px;height:19px;">00000000</div>
<div class="dc" style="left:193px;top:58px;width:204px;height:19px;">Move GPR0, 0</div>
<div class="fc" style="left:1px;top:77px;width:29px;height:19px;padding-top:3px">0003</div>
<div class="dc blue" style="left:30px;top:77px;width:55px;height:19px;">42820000</div>
<div class="dc blue" style="left:85px;top:77px;width:55px;height:19px;">00000000</div>
<div class="dc blue" style="left:140px;top:77px;width:53px;height:19px;">0000000A</div>
<div class="dc" style="left:193px;top:77px;width:204px;height:19px;">Play PL_MK 0, GPR10</div>
<div class="fc" style="left:1px;top:96px;width:29px;height:19px;padding-top:3px">0004</div>
<div class="dc blue" style="left:30px;top:96px;width:55px;height:19px;">21810000</div>
<div class="dc blue" style="left:85px;top:96px;width:55px;height:19px;">00000001</div>
<div class="dc blue" style="left:140px;top:96px;width:53px;height:19px;color:#a0a0a0;">00000000</div>
<div class="dc" style="left:193px;top:96px;width:204px;height:19px;">Jump Title 1</div>
</div>
<div class="btn" style="left:861px;top:180px;width:25px;height:25px;"><i class="a" style="left:8px;top:11px;width:7px;height:2px;background:#000"></i><i class="a" style="left:10px;top:9px;width:2px;height:7px;background:#000"></i></div>
<div class="btn" style="left:861px;top:211px;width:25px;height:25px;"><i class="a" style="left:10px;top:12px;width:4px;height:2px;background:#000"></i></div>
<div class="btn" style="left:861px;top:242px;width:25px;height:25px;"><svg class="a" style="left:4px;top:3px" width="15" height="15" viewBox="0 0 15 15" shape-rendering="crispEdges"><path d="M0 0h14l1 1v14h-15z" fill="#000"/><rect x="2" y="0" width="11" height="7" fill="#fff"/><rect x="2" y="0" width="11" height="1" fill="#e8101c"/><rect x="13" y="2" width="1" height="1" fill="#fff"/><rect x="4" y="10" width="7" height="5" fill="#b0b0b0"/><rect x="5" y="11" width="2" height="3" fill="#404040"/></svg></div>
<div class="t " style="left:455px;top:473px;">Hex</div>
<div class="sunk" style="left:486px;top:468px;width:55px;height:21px;"><span class="ct blue" style="top:3px;left:2px">50000001</span></div>
<div class="sunk" style="left:541px;top:468px;width:55px;height:21px;"><span class="ct blue" style="top:3px;left:2px">0000000A</span></div>
<div class="sunk" style="left:596px;top:468px;width:55px;height:21px;"><span class="ct blue" style="top:3px;left:2px">00000000</span></div>
<div class="sunk" style="left:703px;top:468px;width:46px;height:20px;"><span class="ct " style="letter-spacing:-1px">GPR</span><div class="ddb"><i class="arr"></i></div></div>
<div class="sunk" style="left:755px;top:468px;width:75px;height:21px;"><span class="ct" style="top:3px;left:3px">10</span></div>
<div class="chk" style="left:836px;top:472px"><svg width="7" height="7" style="position:absolute;left:2px;top:2px" shape-rendering="crispEdges" fill="#000"><rect x="6" y="0" width="1" height="1"/><rect x="5" y="1" width="1" height="1"/><rect x="6" y="1" width="1" height="1"/><rect x="0" y="2" width="1" height="1"/><rect x="4" y="2" width="1" height="1"/><rect x="5" y="2" width="1" height="1"/><rect x="6" y="2" width="1" height="1"/><rect x="0" y="3" width="1" height="1"/><rect x="1" y="3" width="1" height="1"/><rect x="3" y="3" width="1" height="1"/><rect x="4" y="3" width="1" height="1"/><rect x="5" y="3" width="1" height="1"/><rect x="0" y="4" width="1" height="1"/><rect x="1" y="4" width="1" height="1"/><rect x="2" y="4" width="1" height="1"/><rect x="3" y="4" width="1" height="1"/><rect x="4" y="4" width="1" height="1"/><rect x="1" y="5" width="1" height="1"/><rect x="2" y="5" width="1" height="1"/><rect x="3" y="5" width="1" height="1"/><rect x="2" y="6" width="1" height="1"/></svg></div>
<div class="sunk" style="left:456px;top:495px;width:66px;height:20px;"><span class="ct " style="">Set</span><div class="ddb"><i class="arr"></i></div></div>
<div class="sunk" style="left:529px;top:495px;width:66px;height:20px;"><span class="ct " style="">Set</span><div class="ddb"><i class="arr"></i></div></div>
<div class="sunk" style="left:602px;top:495px;width:94px;height:20px;"><span class="ct " style="">Move</span><div class="ddb"><i class="arr"></i></div></div>
<div class="sunk" style="left:703px;top:495px;width:46px;height:20px;"><span class="ct " style="letter-spacing:-1px">GPR</span><div class="ddb"><i class="arr"></i></div></div>
<div class="sunk" style="left:755px;top:495px;width:75px;height:21px;"><span class="ct" style="top:3px;left:3px">0</span></div>
<div class="chk" style="left:836px;top:499px"><svg width="7" height="7" style="position:absolute;left:2px;top:2px" shape-rendering="crispEdges" fill="#000"><rect x="6" y="0" width="1" height="1"/><rect x="5" y="1" width="1" height="1"/><rect x="6" y="1" width="1" height="1"/><rect x="0" y="2" width="1" height="1"/><rect x="4" y="2" width="1" height="1"/><rect x="5" y="2" width="1" height="1"/><rect x="6" y="2" width="1" height="1"/><rect x="0" y="3" width="1" height="1"/><rect x="1" y="3" width="1" height="1"/><rect x="3" y="3" width="1" height="1"/><rect x="4" y="3" width="1" height="1"/><rect x="5" y="3" width="1" height="1"/><rect x="0" y="4" width="1" height="1"/><rect x="1" y="4" width="1" height="1"/><rect x="2" y="4" width="1" height="1"/><rect x="3" y="4" width="1" height="1"/><rect x="4" y="4" width="1" height="1"/><rect x="1" y="5" width="1" height="1"/><rect x="2" y="5" width="1" height="1"/><rect x="3" y="5" width="1" height="1"/><rect x="2" y="6" width="1" height="1"/></svg></div>
<div class="btn" style="left:16px;top:545px;width:57px;height:25px;"><span class="a" style="left:0;right:0;top:6px;font-size:12px"><u>S</u>ave</span></div>
<div class="btn" style="left:80px;top:545px;width:86px;height:25px;"><span class="a" style="left:0;right:0;top:6px;font-size:12px">Region code</span></div>
<div class="btn" style="left:172px;top:545px;width:57px;height:25px;"><span class="a" style="left:0;right:0;top:6px;font-size:12px">Start</span></div>
<div class="chk" style="left:235px;top:552px"></div>
<div class="sunk" style="left:258px;top:547px;width:49px;height:20px;"><span class="ct sm" style="">0000</span><div class="ddb"><i class="arr"></i></div></div>
<div class="sunk" style="left:311px;top:547px;width:30px;height:21px;"><span class="ct" style="top:3px;left:2px">0000</span></div>
<div class="t" style="left:350px;top:541px;transform-origin:0 0;transform:scaleX(1.12);font:italic bold 28px/32px 'Liberation Sans',sans-serif;color:#f5f7fb">pel.hu</div>
<div class="sunk" style="left:457px;top:548px;width:25px;height:21px;"><span class="ct" style="top:3px;left:2px">000</span></div>
<div class="sunk" style="left:488px;top:548px;width:56px;height:21px;"><span class="ct" style="top:3px;left:2px">00000001</span></div>
<div class="sunk" style="left:552px;top:548px;width:32px;height:21px;"><span class="ct" style="top:3px;left:2px">0000</span></div>
<div class="sunk" style="left:590px;top:548px;width:56px;height:21px;"><span class="ct" style="top:3px;left:2px">00000000</span></div>
<div class="btn" style="left:821px;top:545px;width:75px;height:25px;"><span class="a" style="left:0;right:0;top:6px;font-size:12px;color:#a0a0a0;text-shadow:1px 1px #fff">Cancel</span></div>
<div class="a" style="left:8px;top:578px;width:896px;height:1px;background:#a0a0a0"></div>
<div class="a" style="left:8px;top:579px;width:896px;height:1px;background:#fff"></div>
<div class="t " style="left:13px;top:582px;">Ready.</div>
<div class="a" style="left:57px;top:580px;width:1px;height:17px;background:#fff"></div>
<div class="a" style="left:59px;top:580px;width:1px;height:17px;background:#a0a0a0"></div>
<svg class="a" style="left:890px;top:583px" width="15" height="14" shape-rendering="geometricPrecision"><path d="M3.5 12.5L13.5 2.5M7.5 12.5L13.5 6.5M11.5 12.5L13.5 10.5" stroke="#999" stroke-width="1.9"/><path d="M4.5 13L14 3.5M8.5 13L14 7.5M12.5 13L14 11.5" stroke="#fff" stroke-width="0.8"/></svg>
</body></html>
